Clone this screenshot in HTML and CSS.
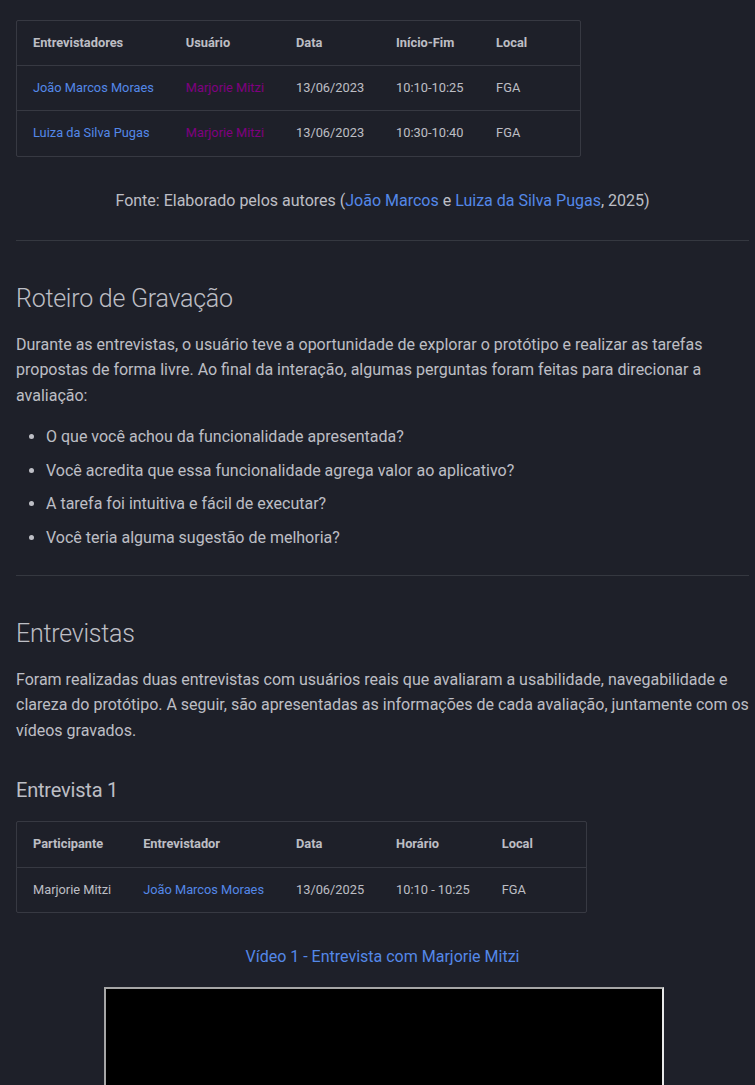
FILE: index.html
```html
<!DOCTYPE html>
<html lang="pt-BR">
<head>
<meta charset="utf-8">
<title>Avaliação</title>
<link rel="stylesheet" href="styles.css">
</head>
<body>
<main class="content">
  <div class="table-wrap first">
    <table class="data">
      <thead>
        <tr><th>Entrevistadores</th><th>Usuário</th><th>Data</th><th>Início-Fim</th><th>Local</th></tr>
      </thead>
      <tbody>
        <tr><td><a class="link" href="#">João Marcos Moraes</a></td><td><a class="visited" href="#">Marjorie Mitzi</a></td><td>13/06/2023</td><td>10:10-10:25</td><td>FGA</td></tr>
        <tr><td><a class="link" href="#">Luiza da Silva Pugas</a></td><td><a class="visited" href="#">Marjorie Mitzi</a></td><td>13/06/2023</td><td>10:30-10:40</td><td>FGA</td></tr>
      </tbody>
    </table>
  </div>
  <p class="caption">Fonte: Elaborado pelos autores (<a class="link" href="#">João Marcos</a> e <a class="link" href="#">Luiza da Silva Pugas</a>, 2025)</p>

  <hr class="rule">

  <h2 class="h2">Roteiro de Gravação</h2>
  <p class="para">Durante as entrevistas, o usuário teve a oportunidade de explorar o protótipo e realizar as tarefas propostas de forma livre. Ao final da interação, algumas perguntas foram feitas para direcionar a avaliação:</p>
  <ul class="list">
    <li>O que você achou da funcionalidade apresentada?</li>
    <li>Você acredita que essa funcionalidade agrega valor ao aplicativo?</li>
    <li>A tarefa foi intuitiva e fácil de executar?</li>
    <li>Você teria alguma sugestão de melhoria?</li>
  </ul>

  <hr class="rule">

  <h2 class="h2">Entrevistas</h2>
  <p class="para">Foram realizadas duas entrevistas com usuários reais que avaliaram a usabilidade, navegabilidade e clareza do protótipo. A seguir, são apresentadas as informações de cada avaliação, juntamente com os vídeos gravados.</p>

  <h3 class="h3">Entrevista 1</h3>
  <div class="table-wrap">
    <table class="data">
      <thead>
        <tr><th>Participante</th><th>Entrevistador</th><th>Data</th><th>Horário</th><th>Local</th></tr>
      </thead>
      <tbody>
        <tr><td>Marjorie Mitzi</td><td><a class="link" href="#">João Marcos Moraes</a></td><td>13/06/2025</td><td>10:10 - 10:25</td><td>FGA</td></tr>
      </tbody>
    </table>
  </div>

  <p class="video-title"><a class="link" href="#">Vídeo 1 - Entrevista com Marjorie Mitzi</a></p>
  <div class="video-row">
    <div class="video"></div>
  </div>
</main>
</body>
</html>
```

FILE: styles.css
```css
html {
  box-sizing: border-box;
}
*, *::before, *::after {
  box-sizing: inherit;
}
body {
  margin: 0;
  background: #1e2029;
  color: hsla(232, 15%, 90%, 0.82);
  font-family: Roboto, "Liberation Sans", sans-serif;
  font-size: 16px;
  line-height: 1.6;
}
.content {
  width: 733px;
  margin-left: 16px;
  padding-top: 19.5px;
}
.link {
  color: #5488e8;
  text-decoration: none;
}
.visited {
  color: #800080;
  text-decoration: none;
}
.table-wrap {
  margin: 0 0 31px;
}
.data {
  display: inline-block;
  vertical-align: top;
  border: 1px solid hsla(232, 15%, 95%, 0.12);
  border-radius: 2px;
  border-spacing: 0;
  font-size: 12.8px;
  line-height: 1.6;
}
.data th {
  min-width: 100px;
  padding: 12px 16px;
  text-align: left;
  font-weight: 700;
  vertical-align: top;
}
.data td {
  padding: 12px 16px;
  border-top: 1px solid hsla(232, 15%, 95%, 0.12);
  vertical-align: top;
}
.caption {
  margin: 0 0 26px;
  text-align: center;
}
.rule {
  margin: 24px 0;
  height: 0;
  border: 0;
  border-bottom: 1px solid hsla(232, 15%, 90%, 0.12);
}
.h2 {
  margin: 40px 0 16px;
  font-size: 25px;
  font-weight: 300;
  line-height: 1.4;
  letter-spacing: -0.01em;
}
.h3 {
  margin: 32px 0 16px;
  font-size: 20px;
  font-weight: 400;
  line-height: 1.5;
  letter-spacing: -0.01em;
}
.para {
  margin: 16px 0;
}
.list {
  margin: 16px 0 16px 10px;
  padding: 0;
  list-style: disc;
}
.list li {
  margin: 0 0 8px 20px;
}
.video-title {
  margin: 0 0 17px;
  text-align: center;
}
.video-row {
  display: flex;
  justify-content: center;
  padding-left: 3px;
}
.video {
  width: 560px;
  height: 315px;
  background: #000;
  border: 2px solid;
  border-color: #a6a6a6 #e8e8e8 #e8e8e8 #a6a6a6;
}
```
